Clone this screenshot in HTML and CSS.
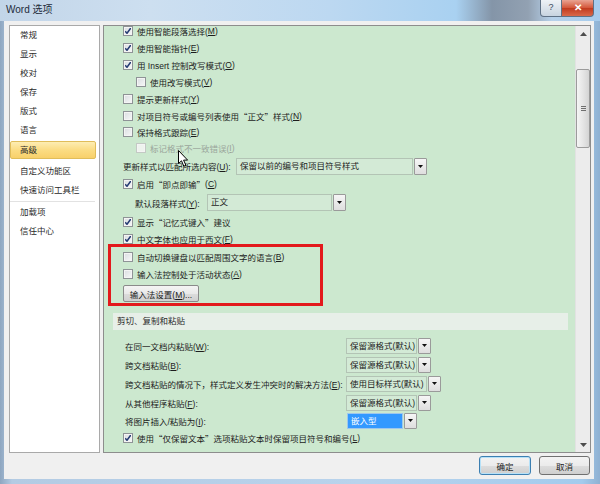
FILE: index.html
```html
<!DOCTYPE html>
<html lang="zh-CN">
<head>
    <meta charset="UTF-8">
    <title>Word 选项</title>
    <link rel="stylesheet" href="styles.css">
</head>
<body>

<div class="window">
    <div class="titlebar">
        <span class="title">Word 选项</span>
        <div class="caption">
            <span class="cap-btn help">?</span>
            <span class="cap-btn close">✕</span>
        </div>
    </div>

    <div class="client">
        <div class="main">
            <ul class="nav">
                <li>常规</li>
                <li>显示</li>
                <li>校对</li>
                <li>保存</li>
                <li>版式</li>
                <li>语言</li>
                <li class="active">高级</li>
                <li class="gap">自定义功能区</li>
                <li>快速访问工具栏</li>
                <li class="sep"></li>
                <li>加载项</li>
                <li>信任中心</li>
            </ul>

            <div class="panel">
                <div class="content">
                    <div class="inner">
                        <div class="row h17"><span class="cb on"></span>使用智能段落选择(<u>M</u>)</div>
                        <div class="row h17"><span class="cb on"></span>使用智能指针(<u>E</u>)</div>
                        <div class="row h17"><span class="cb on"></span>用 Insert 控制改写模式(<u>O</u>)</div>
                        <div class="row h17 sub"><span class="cb"></span>使用改写模式(<u>V</u>)</div>
                        <div class="row h17"><span class="cb"></span>提示更新样式(<u>Y</u>)</div>
                        <div class="row h17"><span class="cb"></span>对项目符号或编号列表使用<span class="q">“</span>正文<span class="q">”</span>样式(<u>N</u>)</div>
                        <div class="row h16"><span class="cb"></span>保持格式跟踪(<u>E</u>)</div>
                        <div class="row h16 sub disabled"><span class="cb"></span>标记格式不一致错误(<u>I</u>)</div>

                        <div class="row h20">
                            <span class="label w113">更新样式以匹配所选内容(<u>U</u>):</span>
                            <span class="select">
                                <span class="field w177">保留以前的编号和项目符号样式</span>
                                <span class="arrow"></span>
                            </span>
                        </div>
                        <div class="row h16"><span class="cb on"></span>启用<span class="q">“</span>即点即输<span class="q">”</span>(<u>C</u>)</div>
                        <div class="row h21 sub2">
                            <span class="label w72">默认段落样式(<u>Y</u>):</span>
                            <span class="select">
                                <span class="field w125">正文</span>
                                <span class="arrow"></span>
                            </span>
                        </div>
                        <div class="row h17"><span class="cb on"></span>显示<span class="q">“</span>记忆式键入<span class="q">”</span>建议</div>
                        <div class="row h18"><span class="cb on"></span>中文字体也应用于西文(<u>F</u>)</div>

                        <!-- 红框标注 -->
                        <div class="mark">
                            <div class="row h19"><span class="cb"></span>自动切换键盘以匹配周围文字的语言(<u>B</u>)</div>
                            <div class="row h16"><span class="cb"></span>输入法控制处于活动状态(<u>A</u>)</div>
                            <button class="ime-btn">输入法设置(<u>M</u>)...</button>
                        </div>

                        <div class="section">剪切、复制和粘贴</div>

                        <div class="paste">
                            <div class="prow h19">
                                <span class="label w221">在同一文档内粘贴(<u>W</u>):</span>
                                <span class="select"><span class="field w71">保留源格式(默认)</span><span class="arrow"></span></span>
                            </div>
                            <div class="prow h19">
                                <span class="label w221">跨文档粘贴(<u>B</u>):</span>
                                <span class="select"><span class="field w71">保留源格式(默认)</span><span class="arrow"></span></span>
                            </div>
                            <div class="prow h19">
                                <span class="label w221">跨文档粘贴的情况下，样式定义发生冲突时的解决方法(<u>E</u>):</span>
                                <span class="select"><span class="field w81">使用目标样式(默认)</span><span class="arrow"></span></span>
                            </div>
                            <div class="prow h19">
                                <span class="label w221">从其他程序粘贴(<u>F</u>):</span>
                                <span class="select"><span class="field w71">保留源格式(默认)</span><span class="arrow"></span></span>
                            </div>
                            <div class="prow h17">
                                <span class="label w221">将图片插入/粘贴为(<u>I</u>):</span>
                                <span class="select"><span class="field w56 picked">嵌入型</span><span class="arrow"></span></span>
                            </div>
                        </div>
                        <div class="row h17"><span class="cb on"></span>使用<span class="q">“</span>仅保留文本<span class="q">”</span>选项粘贴文本时保留项目符号和编号(<u>L</u>)</div>
                    </div>

                    <svg class="cursor" width="12" height="18" viewBox="0 0 12 18">
                        <path d="M0.5 0.5 L0.5 13.5 L3.5 10.8 L5.8 16.2 L7.9 15.3 L5.6 10.1 L9.6 10.1 Z" fill="#fff" stroke="#000" stroke-width="1"/>
                    </svg>
                </div>

                <div class="scrollbar">
                    <span class="sb-btn"><svg width="7" height="4" viewBox="0 0 7 4"><path d="M0 4 L3.5 0 L7 4 Z" fill="#4d4d4d"/></svg></span>
                    <div class="track">
                        <span class="thumb"><span class="grip"></span></span>
                    </div>
                    <span class="sb-btn"><svg width="7" height="4" viewBox="0 0 7 4"><path d="M0 0 L3.5 4 L7 0 Z" fill="#4d4d4d"/></svg></span>
                </div>
            </div>
        </div>

        <div class="footer">
            <button class="btn default">确定</button>
            <button class="btn cancel">取消</button>
        </div>
    </div>
</div>

</body>
</html>
```

FILE: styles.css
```css
* {
    box-sizing: border-box;
}
body {
    margin: 0;
    font-family: "Liberation Sans", "Noto Sans CJK SC", sans-serif;
    font-size: 8.5px;
    color: #1c1c1c;
}
u {
    text-decoration: underline;
    text-underline-offset: 1px;
}
.q {
    font-family: "Noto Sans CJK SC", sans-serif;
}

/* 窗口外框 */
.window {
    width: 600px;
    height: 484px;
    background: linear-gradient(90deg, #8ea6c0 0%, #b3cbe3 2%, #b8d3ec 60%, #a3cbed 97%, #8fb1d2 100%);
    display: flex;
    flex-direction: column;
    overflow: hidden;
}
.titlebar {
    height: 21px;
    display: flex;
    justify-content: space-between;
    padding-left: 6px;
    background: linear-gradient(90deg, #c2d5e8 0%, #cddff0 25%, #bcd8f1 55%, #a9d1f1 76%, #8495a8 82%, #92a1b2 88%, #b7d1ea 92%, #a6cced 100%);
}
.title {
    font-size: 10px;
    line-height: 20px;
    color: #1e2b3a;
}
.caption {
    display: flex;
    margin-right: 6px;
}
.cap-btn {
    height: 17px;
    border: 1px solid #5f7185;
    border-top: none;
    text-align: center;
    line-height: 15px;
}
.help {
    width: 22px;
    background: linear-gradient(#eef2f6, #c8d4e0);
    border-radius: 0 0 0 4px;
    color: #3a4a5c;
    font-size: 9px;
}
.close {
    width: 32px;
    border-left: none;
    border-radius: 0 0 4px 0;
    background: linear-gradient(#e9a392, #d4583b 48%, #c13b1f 52%, #d9694a);
    color: #fff;
    font-size: 10px;
    font-weight: bold;
}

.client {
    flex: 1;
    margin: 0 6px 5px 4px;
    background: #f0f0f0;
    display: flex;
    flex-direction: column;
}
.main {
    display: flex;
    padding: 4px 3px 0 5px;
}

/* 左侧导航 */
.nav {
    list-style: none;
    margin: 0;
    padding: 0;
    width: 91px;
    height: 428px;
    background: #fff;
    border: 1px solid #a9a9a9;
}
.nav li {
    height: 19px;
    line-height: 19px;
    padding-left: 10px;
    color: #2a2a2a;
}
.nav li.active {
    height: 18px;
    line-height: 16px;
    margin: 1px 3px 0 0;
    padding-left: 9px;
    background: linear-gradient(#fdedb3, #fbdc83 50%, #f8d06a);
    border: 1px solid #e0bd5a;
    border-radius: 2px;
}
.nav li.gap {
    margin-top: 3px;
}
.nav li.sep {
    height: 1px;
    margin: 1px 4px 1px 0;
    background: #e2e2e2;
}

/* 右侧面板 */
.panel {
    display: flex;
    margin-left: 3px;
    width: 488px;
    height: 428px;
    border: 1px solid #8d8d8d;
}
.content {
    position: relative;
    width: 471px;
    height: 426px;
    background: #cce8cf;
    overflow: hidden;
}
.inner {
    margin-top: -4px;
}
.row {
    display: flex;
    align-items: center;
    padding-left: 19px;
    white-space: nowrap;
}
.row.sub {
    padding-left: 32px;
}
.row.sub2 {
    padding-left: 31px;
}
.row.disabled {
    color: #9aa59b;
}
.h16 { height: 16px; }
.h17 { height: 17px; }
.h18 { height: 18px; }
.h19 { height: 19px; }
.h20 { height: 20px; }
.h21 { height: 21px; }

.cb {
    width: 10px;
    height: 10px;
    margin-right: 4px;
    flex: none;
    border: 1px solid #8e9396;
    background: linear-gradient(135deg, #d9dde0, #f7f8f8);
    box-shadow: inset 0 0 0 1px #f4f4f4;
}
.cb.on {
    background:
        url("data:image/svg+xml;utf8,<svg xmlns='http://www.w3.org/2000/svg' width='8' height='8' viewBox='0 0 8 8'><path d='M1.2 4.2 L3 6.2 L6.8 1' fill='none' stroke='%23263c73' stroke-width='1.5'/></svg>") center / 8px 8px no-repeat,
        linear-gradient(135deg, #d9dde0, #f7f8f8);
}
.row.disabled .cb {
    border-color: #c3c9c4;
    background: #eef3ee;
}

.label {
    flex: none;
    white-space: nowrap;
}
.w72 { width: 72px; }
.w113 { width: 113px; }
.w221 { width: 221px; }

.select {
    display: flex;
    height: 17px;
}
.field {
    height: 100%;
    line-height: 15px;
    padding-left: 3px;
    border: 1px solid #b3c4b5;
    background: #d3ead6;
    white-space: nowrap;
    overflow: hidden;
}
.w56 { width: 56px; }
.w71 { width: 71px; }
.w81 { width: 81px; }
.w125 { width: 125px; }
.w177 { width: 177px; }
.field.picked {
    margin-left: 1px;
    background: #3399ff;
    border-color: #9fc7ec;
    color: #fff;
}
.arrow {
    width: 13px;
    height: 100%;
    margin-left: 1px;
    border: 1px solid #9a9a9a;
    border-radius: 1px;
    background:
        url("data:image/svg+xml;utf8,<svg xmlns='http://www.w3.org/2000/svg' width='5' height='3' viewBox='0 0 5 3'><path d='M0 0 L5 0 L2.5 3 Z' fill='%23111'/></svg>") center / 5px 3px no-repeat,
        linear-gradient(#f6f6f6, #dedede);
}
.paste .select {
    height: 16px;
}
.paste .field {
    line-height: 14px;
}

/* 红框 */
.mark {
    width: 215px;
    margin: -4px 0 0 4px;
    padding-bottom: 1px;
    border: 3px solid #e3191c;
}
.mark .row {
    padding-left: 12px;
}
.ime-btn {
    display: block;
    margin: 3px 0 0 12px;
    width: 76px;
    height: 17px;
    padding: 0;
    font: inherit;
    color: #1c1c1c;
    border: 1px solid #8a8a8a;
    border-radius: 2px;
    background: linear-gradient(#f4f4f4, #e9e9e9 50%, #dcdcdc 51%, #d0d0d0);
}

.section {
    margin: 7px 7px 0 9px;
    height: 17px;
    line-height: 17px;
    padding-left: 4px;
    background: #e7efe8;
    color: #2a2a2a;
}
.paste {
    margin-top: 6px;
}
.prow {
    display: flex;
    align-items: center;
    padding-left: 21px;
}

.cursor {
    position: absolute;
    left: 74px;
    top: 124px;
}

/* 滚动条 */
.scrollbar {
    width: 15px;
    display: flex;
    flex-direction: column;
    background: #ececec;
    border-left: 1px solid #e2e2e2;
}
.sb-btn {
    height: 15px;
    display: flex;
    align-items: center;
    justify-content: center;
}
.track {
    flex: 1;
}
.thumb {
    display: flex;
    align-items: center;
    justify-content: center;
    margin: 28px 0 0 0;
    height: 79px;
    border: 1px solid #9b9b9b;
    border-radius: 2px;
    background: linear-gradient(90deg, #f5f5f5, #e2e2e2 60%, #d4d4d4);
}
.grip {
    width: 5px;
    height: 5px;
    background: repeating-linear-gradient(#6f6f6f 0 1px, transparent 1px 2px);
}

/* 底部按钮 */
.footer {
    display: flex;
    justify-content: flex-end;
    gap: 8px;
    padding: 3px 4px 0 0;
}
.btn {
    height: 19px;
    padding: 0;
    font: inherit;
    color: #1c1c1c;
    border: 1px solid #707070;
    border-radius: 3px;
    background: linear-gradient(#f3f3f3, #ebebeb 50%, #dddddd 51%, #cfcfcf);
}
.btn.default {
    width: 52px;
    border-color: #3c7fb1;
    box-shadow: inset 0 0 0 1px #b6e1f8;
}
.btn.cancel {
    width: 51px;
}
```
